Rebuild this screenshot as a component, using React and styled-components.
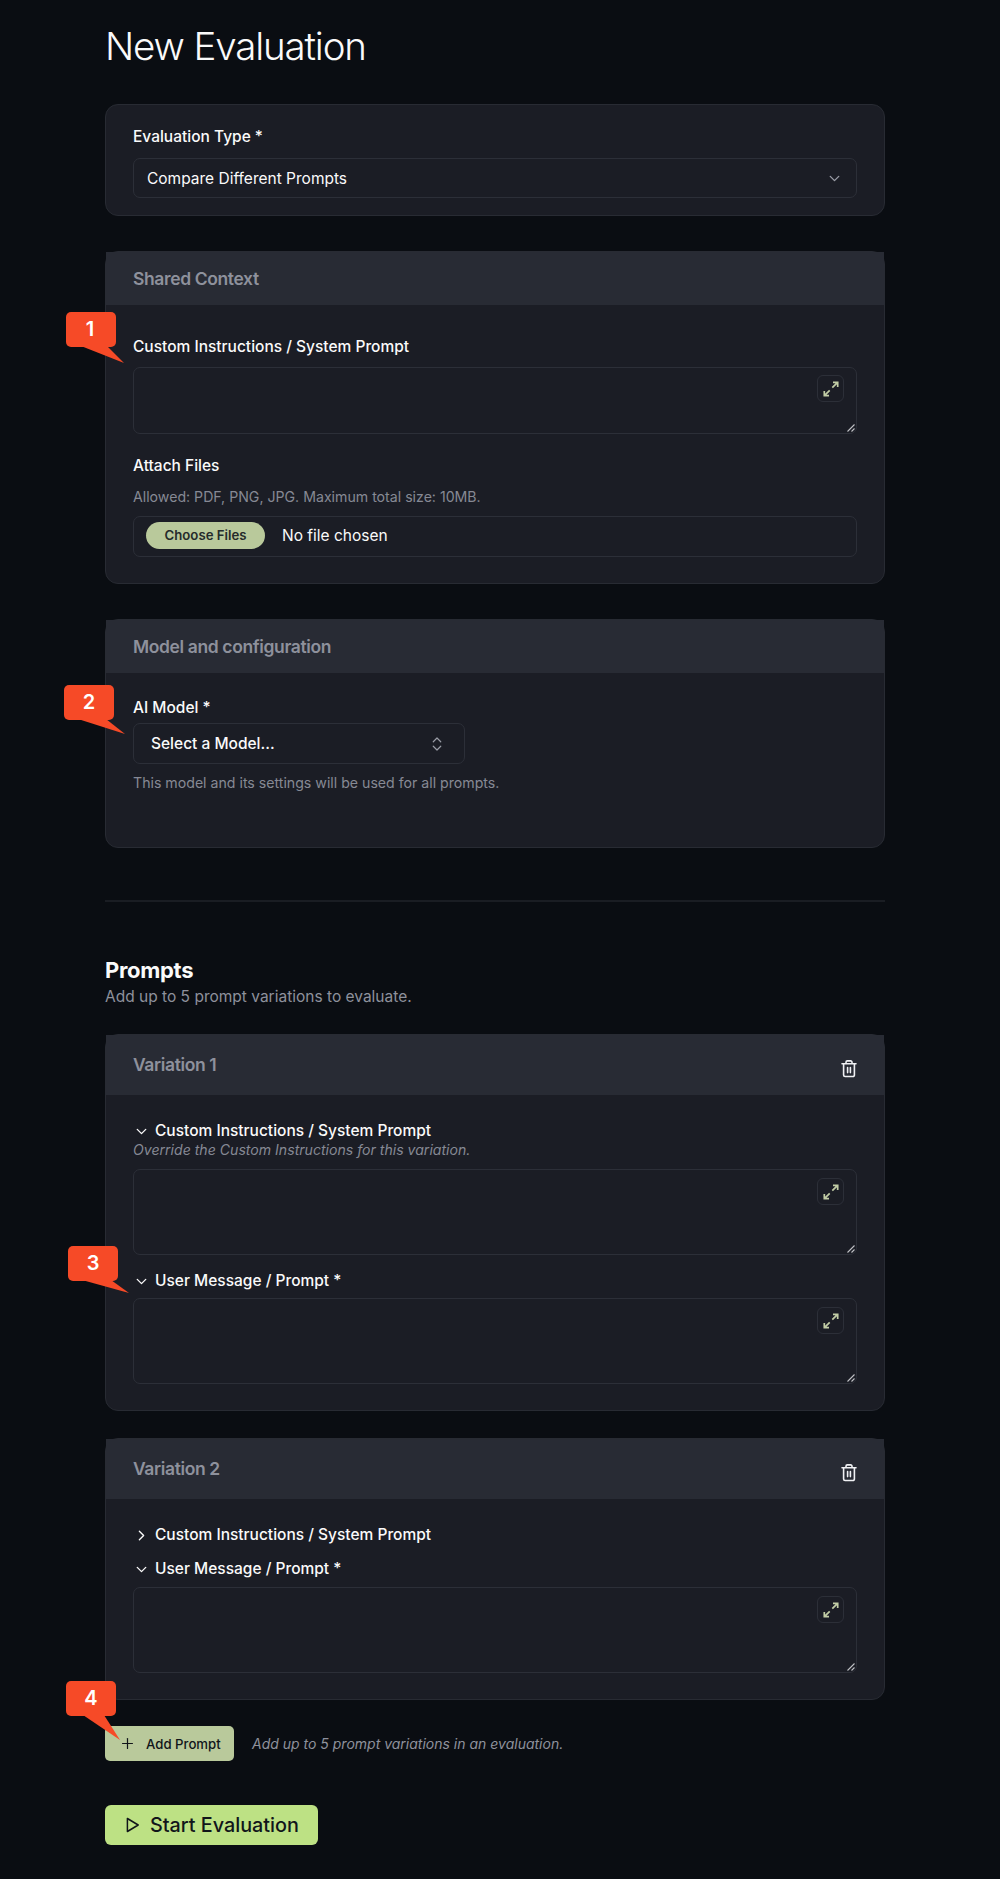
import React, { useState } from 'react';
import styled, { createGlobalStyle } from 'styled-components';
import { ChevronDown, ChevronRight, ChevronsUpDown, Plus } from 'lucide-react';

const GlobalStyle = createGlobalStyle`
    * {
        box-sizing: border-box;
    }

    body {
        margin: 0;
        background-color: #0a0d12;
        color: #fafafa;
        font-family: Inter, "Liberation Sans", sans-serif;
    }
`;

const TrashIcon = () => (
    <svg width="18" height="20" viewBox="0 0 18 20" fill="none" stroke="#f0f1f4" strokeWidth="1.6" strokeLinecap="round" strokeLinejoin="round">
        <path d="M2 4.8h14M3.6 4.8V16a1.5 1.5 0 0 0 1.5 1.5h7.8a1.5 1.5 0 0 0 1.5-1.5V4.8M6 4.6V3.2A1.3 1.3 0 0 1 7.3 1.9h3.4A1.3 1.3 0 0 1 12 3.2v1.4M7.6 8.6v5M10.4 8.6v5" />
    </svg>
);

const ExpandIcon = () => (
    <svg width="16" height="16" viewBox="0 0 16 16" fill="none" stroke="#c1cca5" strokeWidth="1.7">
        <path d="M9.3 6.7 14.6 1.4M10 1.4h4.7v4.7M6.7 9.3 1.4 14.6M1.3 9.9v4.7H6" />
    </svg>
);

const PlayIcon = () => (
    <svg width="15" height="16" viewBox="0 0 15 16" fill="none" stroke="currentColor" strokeWidth="1.5" strokeLinejoin="round">
        <path d="M2.4 1.5v13l10.8-6.5z" />
    </svg>
);

const PromptField = ({ height, top }) => (
    <FieldWrapper>
        <TextArea $height={height} />
        <ExpandButton $top={top} aria-label="Expand"><ExpandIcon /></ExpandButton>
        <Grip viewBox="0 0 8 8">
            <path d="M.5 7.5l7-7M4.5 7.5l3-3" />
        </Grip>
    </FieldWrapper>
);

const Pointer = ({ number, left, top, tail, nudge }) => (
    <Callout $left={left} $top={top}>
        <svg width="62" height="62" viewBox="0 0 62 62">
            <path d={tail} fill="#f64a27" />
        </svg>
        <CalloutLabel $nudge={nudge}>{number}</CalloutLabel>
    </Callout>
);

const Variation = ({ index, openInstructions, children }) => {
    const [open, setOpen] = useState(openInstructions);

    return (
        <Card>
            <CardHeader $height={60}>
                <CardTitle>Variation {index}</CardTitle>
                <IconButton aria-label="Delete variation"><TrashIcon /></IconButton>
            </CardHeader>
            <CardBody $top={25}>
                <Toggle onClick={() => setOpen(!open)}>
                    {open ? <ChevronDown size={17} strokeWidth={1.9} /> : <ChevronRight size={17} strokeWidth={1.9} />}
                    Custom Instructions / System Prompt
                </Toggle>
                {open && <>
                    <Override>Override the Custom Instructions for this variation.</Override>
                    <PromptField height={86} top={9} />
                </>}
                <Toggle $top={open ? 15 : 14}>
                    <ChevronDown size={17} strokeWidth={1.9} />
                    User Message / Prompt *
                </Toggle>
                <FieldGap $size={open ? 8 : 9} />
                <PromptField height={86} top={9} />
            </CardBody>
            {children}
        </Card>
    );
}

export const App = () => {
    return (
    <>
        <GlobalStyle />
        <Page>
            <Title>New Evaluation</Title>

            <Card>
                <CardBody $top={22} $bottom={17}>
                    <Label>Evaluation Type *</Label>
                    <Select $gap={11}>
                        Compare Different Prompts
                        <ChevronDown size={17} strokeWidth={1.9} />
                    </Select>
                </CardBody>
            </Card>

            <Card $top={35}>
                <CardHeader $height={53}>
                    <CardTitle>Shared Context</CardTitle>
                </CardHeader>
                <CardBody $top={32}>
                    <Label>Custom Instructions / System Prompt</Label>
                    <FieldGap $size={10} />
                    <PromptField height={67} top={8} />
                    <Label $top={22}>Attach Files</Label>
                    <Hint $top={11}>Allowed: PDF, PNG, JPG. Maximum total size: 10MB.</Hint>
                    <FileInput>
                        <FileButton>Choose Files</FileButton>
                        No file chosen
                    </FileInput>
                </CardBody>
                <Pointer number="1" left={-40} top={60} nudge={2} tail="M15 34 58 51 41 34Z" />
            </Card>

            <Card $top={35}>
                <CardHeader $height={53}>
                    <CardTitle>Model and configuration</CardTitle>
                </CardHeader>
                <CardBody $top={25} $bottom={54}>
                    <Label>AI Model *</Label>
                    <ModelSelect>
                        Select a Model...
                        <ChevronsUpDown size={18} strokeWidth={1.6} />
                    </ModelSelect>
                    <Hint $top={9}>This model and its settings will be used for all prompts.</Hint>
                </CardBody>
                <Pointer number="2" left={-42} top={65} tail="M14 34 61 49 42 34Z" />
            </Card>

            <Divider />

            <SectionTitle>Prompts</SectionTitle>
            <SectionText>Add up to 5 prompt variations to evaluate.</SectionText>

            <Variations>
                <Variation index={1} openInstructions>
                    <Pointer number="3" left={-38} top={211} tail="M14 34 61 47 43 34Z" />
                </Variation>
                <Variation index={2} openInstructions={false}>
                    <Pointer number="4" left={-40} top={242} tail="M17 34 54 59 38 34Z" />
                </Variation>
            </Variations>

            <AddRow>
                <AddButton>
                    <Plus size={17} strokeWidth={1.7} />
                    Add Prompt
                </AddButton>
                <AddHint>Add up to 5 prompt variations in an evaluation.</AddHint>
            </AddRow>

            <StartButton>
                <PlayIcon />
                Start Evaluation
            </StartButton>
        </Page>
    </>
    );
}

const Page = styled.main`
    width: 780px;
    margin-left: 105px;
    padding: 20px 0 34px;
    display: flex;
    flex-direction: column;
`;

const Title = styled.h1`
    margin: 0 0 31px;
    height: 53px;
    font-size: 38.5px;
    line-height: 53px;
    font-weight: 300;
    letter-spacing: -1.15px;
`;

const Card = styled.section`
    position: relative;
    margin-top: ${({ $top }) => $top || 0}px;
    border: 1px solid #282b33;
    border-radius: 13px;
    background-color: #1b1d25;
`;

const CardHeader = styled.header`
    display: flex;
    align-items: center;
    justify-content: space-between;
    height: ${({ $height }) => $height}px;
    padding: 0 26px 0 27px;
    background-color: #282b34;
`;

const CardTitle = styled.h2`
    margin: 0;
    color: #8e919c;
    font-size: 17.5px;
    line-height: 26px;
    font-weight: 600;
    letter-spacing: -0.38px;
`;

const CardBody = styled.div`
    display: flex;
    flex-direction: column;
    padding: ${({ $top, $bottom }) => `${$top}px 27px ${$bottom || 26}px`};
`;

const Label = styled.label`
    margin-top: ${({ $top }) => $top || 0}px;
    height: 20px;
    font-size: 15.5px;
    line-height: 20px;
    font-weight: 500;
`;

const Select = styled.div`
    display: flex;
    align-items: center;
    justify-content: space-between;
    height: 40px;
    margin-top: ${({ $gap }) => $gap}px;
    padding: 0 13px;
    border: 1px solid #2c2f38;
    border-radius: 7px;
    font-size: 15.5px;

    svg {
        color: #9a9da6;
    }
`;

const ModelSelect = styled(Select)`
    width: 332px;
    height: 41px;
    margin-top: 5px;
    padding: 0 18px 0 17px;
    font-weight: 500;
`;

const FieldGap = styled.div`
    height: ${({ $size }) => $size}px;
`;

const FieldWrapper = styled.div`
    position: relative;
    display: flex;
`;

const TextArea = styled.textarea`
    width: 100%;
    height: ${({ $height }) => $height}px;
    padding: 10px 50px 10px 13px;
    border: 1px solid #2c2f38;
    border-radius: 7px;
    outline: none;
    resize: none;
    background-color: transparent;
    color: #fafafa;
    font: inherit;
`;

const ExpandButton = styled.button`
    position: absolute;
    top: ${({ $top }) => $top}px;
    right: 13px;
    width: 27px;
    height: 27px;
    display: flex;
    align-items: center;
    justify-content: center;
    padding: 0;
    border: 1px solid #2c2f38;
    border-radius: 6px;
    background-color: transparent;
    cursor: pointer;
`;

const Grip = styled.svg`
    position: absolute;
    right: 2px;
    bottom: 2px;
    width: 8px;
    height: 8px;
    fill: none;
    stroke: #c0c2c6;
    stroke-width: 1.1;
`;

const Hint = styled.p`
    margin: ${({ $top }) => $top}px 0 0;
    height: 20px;
    color: #868994;
    font-size: 14.15px;
    line-height: 20px;
`;

const FileInput = styled.div`
    display: flex;
    align-items: center;
    gap: 17px;
    height: 41px;
    margin-top: 9px;
    padding: 0 13px 3px 12px;
    border: 1px solid #2c2f38;
    border-radius: 7px;
    font-size: 15.5px;
`;

const FileButton = styled.button`
    width: 119px;
    height: 27px;
    padding: 0;
    border: 0;
    border-radius: 14px;
    background-color: #b9c99b;
    color: #252b2b;
    font: inherit;
    font-size: 13.2px;
    font-weight: 600;
`;

const Divider = styled.hr`
    width: 100%;
    height: 2px;
    margin: 52px 0 0;
    border: 0;
    background-color: #1a1d23;
`;

const SectionTitle = styled.h2`
    margin: 53px 0 0;
    font-size: 22px;
    line-height: 31px;
    font-weight: 700;
    letter-spacing: -0.3px;
`;

const SectionText = styled.p`
    margin: 0;
    color: #8e919c;
    font-size: 15.5px;
    line-height: 22px;
`;

const Variations = styled.div`
    display: flex;
    flex-direction: column;
    gap: 27px;
    margin-top: 26px;
`;

const IconButton = styled.button`
    display: flex;
    padding: 7px 0 0;
    border: 0;
    background-color: transparent;
    cursor: pointer;
`;

const Toggle = styled.button`
    display: flex;
    align-items: center;
    gap: 5px;
    height: 20px;
    margin-top: ${({ $top }) => $top || 0}px;
    padding: 0;
    border: 0;
    background-color: transparent;
    color: #fafafa;
    font: inherit;
    font-size: 15.5px;
    font-weight: 500;
    cursor: pointer;

    svg {
        margin-top: 2px;
    }
`;

const Override = styled.p`
    margin: 0 0 9px;
    height: 20px;
    color: #868994;
    font-size: 14.1px;
    line-height: 20px;
    font-style: italic;
`;

const AddRow = styled.div`
    display: flex;
    align-items: center;
    gap: 18px;
    margin-top: 26px;
`;

const AddButton = styled.button`
    display: flex;
    align-items: center;
    gap: 10px;
    width: 129px;
    height: 35px;
    padding: 0 0 0 14px;
    border: 0;
    border-radius: 5px;
    background-color: #b9c99b;
    color: #11151a;
    font: inherit;
    font-size: 13.2px;
    font-weight: 500;
    white-space: nowrap;
`;

const AddHint = styled.span`
    color: #8e919c;
    font-size: 14px;
    font-style: italic;
`;

const StartButton = styled.button`
    display: flex;
    align-items: center;
    gap: 10px;
    width: 213px;
    height: 40px;
    margin-top: 44px;
    padding: 0 0 0 20px;
    border: 0;
    border-radius: 6px;
    background-color: #bde184;
    color: #11151a;
    font: inherit;
    font-size: 19.8px;
    font-weight: 500;
    white-space: nowrap;
`;

const Callout = styled.div`
    position: absolute;
    left: ${({ $left }) => $left}px;
    top: ${({ $top }) => $top}px;
    z-index: 2;
    width: 62px;
    height: 62px;

    svg {
        display: block;
    }
`;

const CalloutLabel = styled.span`
    position: absolute;
    left: 0;
    top: 0;
    width: 50px;
    height: 35px;
    padding-right: ${({ $nudge }) => $nudge || 0}px;
    border-radius: 5px;
    background-color: #f64a27;
    color: #fff;
    font-size: 20px;
    line-height: 35px;
    font-weight: 600;
    text-align: center;
`;

export default App;
